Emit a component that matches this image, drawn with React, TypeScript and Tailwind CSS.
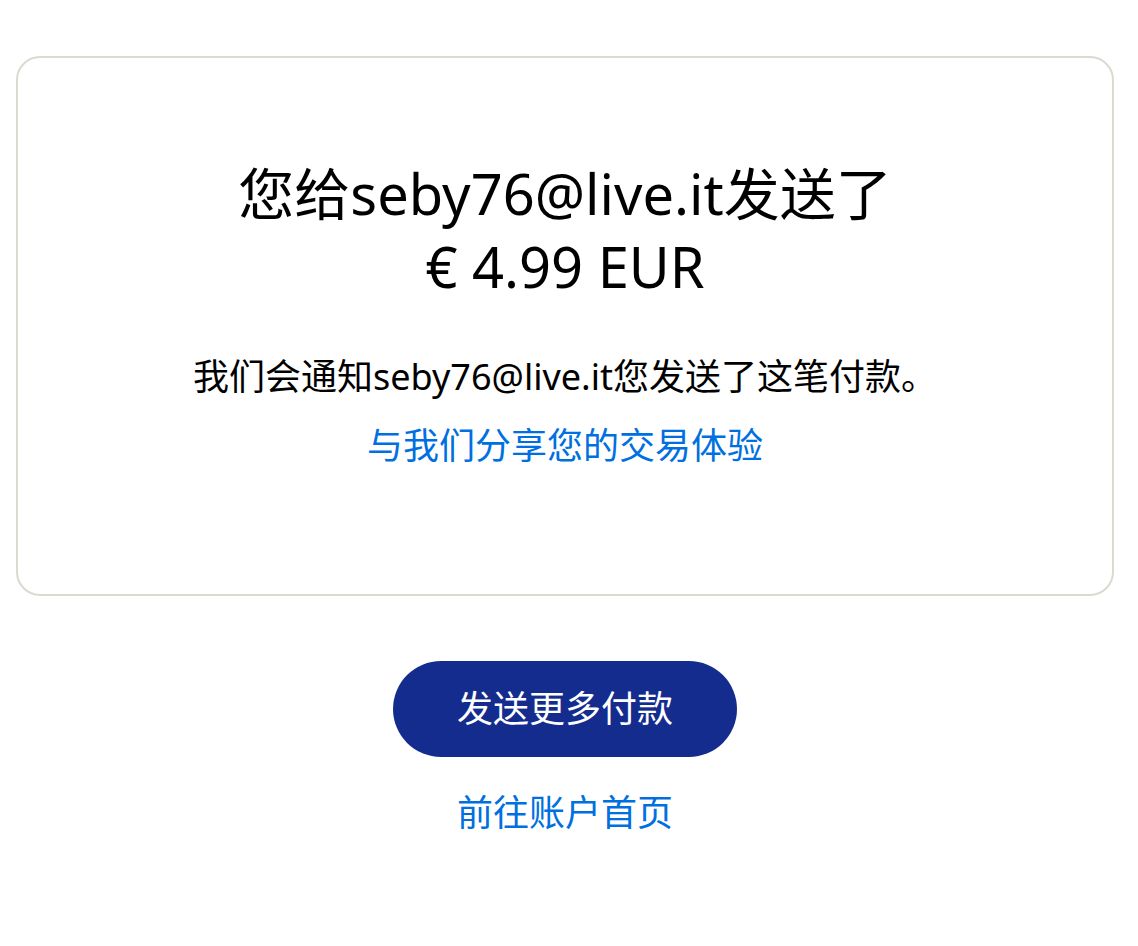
import React from "react";

export default function App() {
  return (
    <div className="w-[1138px] min-h-[946px] bg-white pl-4 pr-6 pt-14 font-['Noto_Sans','Noto_Sans_CJK_SC',sans-serif] text-black">
      <div className="flex flex-col items-center rounded-3xl border-2 border-[#dcd9d0] pt-[99px] pb-[124px]">
        <h1 className="text-center text-[56px] leading-[73px] font-normal">
          <div>您给seby76@live.it发送了</div>
          <div>€ 4.99 EUR</div>
        </h1>
        <p className="mt-[50px] text-center text-[36px] leading-[48px]">
          我们会通知seby76@live.it您发送了这笔付款。
        </p>
        <a href="#" className="mt-[21px] text-[36px] leading-[48px] text-[#0070e0]">
          与我们分享您的交易体验
        </a>
      </div>
      <div className="flex flex-col items-center">
        <button className="mt-[65px] flex h-[96px] w-[344px] items-center justify-center rounded-full bg-[#142c8e] text-[36px] text-white">
          发送更多付款
        </button>
        <a href="#" className="mt-8 text-[36px] leading-[48px] text-[#0070e0]">
          前往账户首页
        </a>
      </div>
    </div>
  );
}
